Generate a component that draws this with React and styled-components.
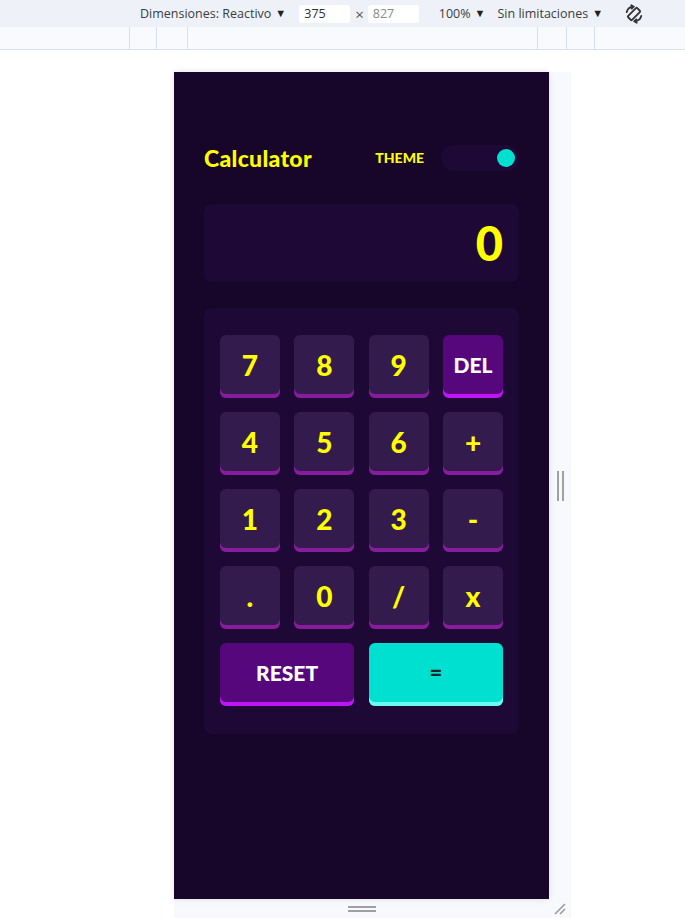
import React from 'react';
import styled, { createGlobalStyle } from 'styled-components';

const GlobalStyle = createGlobalStyle`
  body {
    margin: 0;
    background: #ffffff;
    font-family: 'Open Sans', 'Liberation Sans', sans-serif;
  }
`;

const Page = styled.div`
  width: 685px;
  height: 918px;
  overflow: hidden;
  display: flex;
  flex-direction: column;
`;

/* devtools toolbar */

const Toolbar = styled.div`
  height: 27px;
  background: #eef2f8;
  display: flex;
  align-items: center;
  padding-left: 140px;
  font-size: 12.5px;
  color: #3c3c3c;
  box-sizing: border-box;
`;

const Menu = styled.span`
  display: flex;
  align-items: center;
  gap: 4px;
  margin-left: ${(p) => p.$before || 0}px;
  margin-right: ${(p) => p.$after || 0}px;
  white-space: nowrap;
`;

const Caret = styled.span`
  font-size: 11px;
  color: #222;
  margin-top: -3px;
`;

const SizeInput = styled.span`
  width: 51px;
  height: 18px;
  background: #ffffff;
  border-radius: 3px;
  display: flex;
  align-items: center;
  padding-left: 5px;
  box-sizing: border-box;
  color: ${(p) => (p.$muted ? '#8a8a8a' : '#303030')};
`;

const Times = styled.span`
  margin: 0 4px 0 5px;
  font-size: 15px;
  color: #555;
`;

const Ruler = styled.div`
  height: 22px;
  background: #f8fafd;
  border-bottom: 1px solid #d9e2f0;
  display: flex;
`;

const Mark = styled.div`
  width: ${(p) => p.$w}px;
  flex: ${(p) => (p.$grow ? 1 : 'none')};
  border-left: ${(p) => (p.$line ? '1px solid #d3e1f7' : 'none')};
  box-sizing: border-box;
`;

/* emulated device */

const Stage = styled.div`
  padding: 22px 0 0 174px;
`;

const Frame = styled.div`
  display: grid;
  grid-template-columns: 375px 22px;
  grid-template-rows: 827px 19px;
  width: 397px;
  background: #f8f9fd;
`;

const Handle = styled.div`
  display: flex;
  align-items: center;
  justify-content: center;
  gap: ${(p) => p.$gap || 0}px;
  flex-direction: ${(p) => (p.$row ? 'column' : 'row')};
`;

const Grip = styled.span`
  background: #a0a0a0;
  width: ${(p) => (p.$row ? '28px' : '2px')};
  height: ${(p) => (p.$row ? '2px' : '30px')};
`;

const Device = styled.div`
  background: #17062a;
  padding: 73px 30px 0;
  box-sizing: border-box;
  box-shadow: 0 0 6px rgba(0, 0, 0, 0.12);
  font-family: 'Lato', 'Open Sans', sans-serif;
`;

/* calculator */

const Header = styled.header`
  height: 26px;
  display: flex;
  align-items: center;
  justify-content: space-between;
`;

const Title = styled.h1`
  margin: 0;
  font-size: 23px;
  font-weight: 900;
  color: #ffff00;
  letter-spacing: 0.3px;
`;

const ThemeRow = styled.div`
  display: flex;
  align-items: center;
  gap: 17px;
`;

const ThemeLabel = styled.span`
  font-size: 14px;
  font-weight: 900;
  color: #ffff00;
  margin-top: -2px;
`;

const Track = styled.div`
  width: 78px;
  height: 26px;
  border-radius: 13px;
  background: #1e0836;
  display: flex;
  align-items: center;
  justify-content: flex-end;
  padding-right: 4px;
  box-sizing: border-box;
`;

const Knob = styled.span`
  width: 18px;
  height: 18px;
  border-radius: 50%;
  background: #00e0d1;
`;

const Screen = styled.div`
  margin-top: 33px;
  height: 78px;
  border-radius: 8px;
  background: #1e0836;
  display: flex;
  align-items: center;
  justify-content: flex-end;
  padding-right: 16px;
  font-size: 47px;
  font-weight: 900;
  color: #ffff00;
`;

const Keypad = styled.div`
  margin-top: 26px;
  border-radius: 8px;
  background: #1e0836;
  padding: 27px 16px 28px;
  display: grid;
  grid-template-columns: repeat(4, 1fr);
  column-gap: 14.5px;
  row-gap: 14px;
`;

const tones = {
  num: { face: '#331c4d', shadow: '#881c9e', ink: '#ffff00', size: 28 },
  del: { face: '#56077c', shadow: '#be15f4', ink: '#ffffff', size: 21 },
  eq: { face: '#00e0d1', shadow: '#6cf9f1', ink: '#1a2327', size: 22 },
};

const Key = styled.button`
  grid-column: span ${(p) => p.$span || 1};
  height: 63px;
  border: 0;
  border-radius: 6px;
  background: ${(p) => tones[p.$tone].face};
  box-shadow: inset 0 -4px 0 ${(p) => tones[p.$tone].shadow};
  color: ${(p) => tones[p.$tone].ink};
  font-family: 'Lato', 'Open Sans', sans-serif;
  font-size: ${(p) => tones[p.$tone].size}px;
  font-weight: 900;
  padding: 0 0 4px;
  cursor: pointer;
`;

const keys = [
  ['7', 'num'], ['8', 'num'], ['9', 'num'], ['DEL', 'del'],
  ['4', 'num'], ['5', 'num'], ['6', 'num'], ['+', 'num'],
  ['1', 'num'], ['2', 'num'], ['3', 'num'], ['-', 'num'],
  ['.', 'num'], ['0', 'num'], ['/', 'num'], ['x', 'num'],
];

function RotateIcon() {
  return (
    <svg width="22" height="22" viewBox="0 0 24 24" fill="none" stroke="#333" strokeWidth="2" strokeLinecap="round">
      <rect x="9" y="5" width="6" height="14" rx="1" transform="rotate(45 12 12)" />
      <path d="M4 10 A8 8 0 0 1 11 4" />
      <path d="M20 14 A8 8 0 0 1 13 20" />
      <path d="M9 2.5 L11.5 4 L9.5 6" />
      <path d="M15 21.5 L12.5 20 L14.5 18" />
    </svg>
  );
}

export default function App() {
  return (
    <Page>
      <GlobalStyle />
      <Toolbar>
        <Menu $after={13}>
          Dimensiones: Reactivo <Caret>▼</Caret>
        </Menu>
        <SizeInput>375</SizeInput>
        <Times>×</Times>
        <SizeInput $muted>827</SizeInput>
        <Menu $before={20}>
          100% <Caret>▼</Caret>
        </Menu>
        <Menu $before={12} $after={20}>
          Sin limitaciones <Caret>▼</Caret>
        </Menu>
        <RotateIcon />
      </Toolbar>
      <Ruler>
        <Mark $w={129} />
        <Mark $w={27} $line />
        <Mark $w={31} $line />
        <Mark $w={350} $line />
        <Mark $w={29} $line />
        <Mark $w={28} $line />
        <Mark $grow $line />
      </Ruler>
      <Stage>
        <Frame>
          <Device>
            <Header>
              <Title>Calculator</Title>
              <ThemeRow>
                <ThemeLabel>THEME</ThemeLabel>
                <Track>
                  <Knob />
                </Track>
              </ThemeRow>
            </Header>
            <Screen>0</Screen>
            <Keypad>
              {keys.map(([label, tone]) => (
                <Key key={label} $tone={tone}>
                  {label}
                </Key>
              ))}
              <Key $tone="del" $span={2}>RESET</Key>
              <Key $tone="eq" $span={2}>=</Key>
            </Keypad>
          </Device>
          <Handle $gap={3}>
            <Grip />
            <Grip />
          </Handle>
          <Handle $row $gap={2}>
            <Grip $row />
            <Grip $row />
          </Handle>
          <Handle>
            <svg width="14" height="14" viewBox="0 0 14 14" stroke="#9a9a9a" strokeWidth="1.6">
              <line x1="2" y1="12" x2="12" y2="2" />
              <line x1="7" y1="12" x2="12" y2="7" />
            </svg>
          </Handle>
        </Frame>
      </Stage>
    </Page>
  );
}
